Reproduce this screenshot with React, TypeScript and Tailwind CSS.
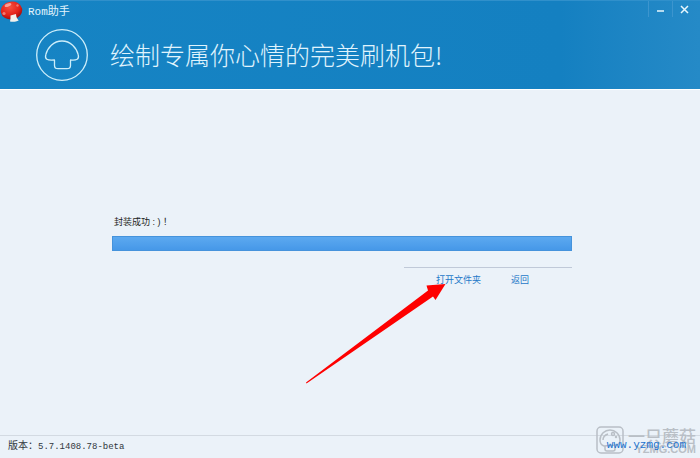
import type { ReactNode } from 'react';

function AppIcon() {
  return (
    <svg viewBox="0 0 24 22" className="h-[22px] w-6" aria-hidden="true">
      <defs>
        <radialGradient id="cap" cx="0.45" cy="0.3" r="0.75">
          <stop offset="0" stopColor="#f8503f" />
          <stop offset="0.6" stopColor="#e32119" />
          <stop offset="1" stopColor="#8c0a0c" />
        </radialGradient>
      </defs>
      <ellipse cx="11.500" cy="9.500" rx="10.800" ry="9" fill="url(#cap)" transform="rotate(-10 11.500 9.500)" />
      <ellipse cx="8" cy="4" rx="3.500" ry="1.600" fill="#fff" opacity="0.5" transform="rotate(-20 8 4)" />
      <circle cx="4" cy="12.500" r="1.600" fill="#ffb9ae" opacity="0.6" />
      <circle cx="17.500" cy="4.500" r="1.200" fill="#ffc3ba" opacity="0.5" />
      <path d="M10.500 14.500l5.500-1.500c0 2.500 1 4.500 2.700 6.500-2.700 1.300-5.400 1.500-8.700 1 .5-2 .7-4 .5-6z" fill="#f3f1ec" />
    </svg>
  );
}

function MushroomLogo() {
  return (
    <svg viewBox="0 0 52 52" className="size-[52px] shrink-0" fill="none" stroke="#cdeefa" strokeWidth="1.300" strokeLinejoin="round" aria-hidden="true">
      <circle cx="26" cy="26" r="25.300" />
      <path d="M18.500 31C15 31.300 12.500 31.300 10.800 30.300C9.300 29.400 9.300 27.500 9.800 25.700C11.500 18.500 17.500 12 26 12S40.500 18.500 42.200 25.700C42.700 27.500 42.700 29.400 41.200 30.300C39.500 31.300 37 31.300 34.500 31V36.500C34.500 38.700 33.200 39.700 31 39.700H22C19.800 39.700 18.500 38.700 18.500 36.500Z" />
    </svg>
  );
}

function WindowButton({ label, children }: { label: string; children: ReactNode }) {
  return (
    <button type="button" aria-label={label} className="flex h-4 w-6 justify-center border-l border-[#3c95ce] pt-1">
      {children}
    </button>
  );
}

function Watermark() {
  return (
    <div className="absolute right-1 bottom-1 flex items-center gap-1 text-[#b9bfc6]" aria-hidden="true">
      <svg viewBox="0 0 28 28" className="size-7" fill="none" stroke="currentColor" strokeWidth="1.500">
        <rect x="1" y="1" width="26" height="26" rx="4" />
        <path d="M8 20c-3-1-4-3-4-6C4 8 9 4 14 4s10 4 10 10c0 3-2 5-4 5-4 .5-8 .5-12 1z" />
        <path d="M9 20v3c0 1.500 1 2 2 2h6c1 0 2-.5 2-2v-3" />
        <circle cx="17" cy="8" r="1.500" />
        <circle cx="20" cy="11" r="0.500" />
        <path d="M7 14c0-3 2-5 5-6" />
      </svg>
      <div className="flex flex-col items-end">
        <span className="font-['Noto_Sans_CJK_SC',sans-serif] text-[17px] leading-[18px] font-medium">一只蘑菇</span>
        <span className="font-['Liberation_Sans',sans-serif] text-[11px] leading-[9px] font-bold">YZMG.COM</span>
      </div>
    </div>
  );
}

export default function App() {
  return (
    <div className="relative flex min-h-screen flex-col bg-[#ebf2f9] font-['Liberation_Sans','Noto_Sans_CJK_SC',sans-serif]">
      {/* Header */}
      <header className="h-[90px] border-t border-b border-t-[#3090cb] border-b-white bg-linear-to-r from-[#1684c4] via-[#1480c1] via-80% to-[#258ac7]">
        <div className="flex h-[22px] items-start justify-between pr-1">
          <div className="flex items-center gap-1 text-[11px] leading-[22px] text-[#e2f4fd]">
            <AppIcon />
            <span className="font-['Liberation_Mono','Noto_Sans_CJK_SC',monospace]">Rom助手</span>
          </div>
          <div className="flex">
            <WindowButton label="最小化">
              <svg viewBox="0 0 9 9" className="size-[9px]" stroke="#e8f7fd" strokeWidth="1.500" aria-hidden="true">
                <path d="M1 6h7" />
              </svg>
            </WindowButton>
            <WindowButton label="关闭">
              <svg viewBox="0 0 9 9" className="size-[9px]" stroke="#e8f7fd" strokeWidth="1.500" aria-hidden="true">
                <path d="M1 1l7 7M8 1l-7 7" />
              </svg>
            </WindowButton>
          </div>
        </div>
        <div className="flex items-center gap-[22px] pl-9">
          <div className="pt-1.5">
            <MushroomLogo />
          </div>
          <h1 className="pt-1 font-['Noto_Sans_CJK_SC',sans-serif] text-[25px] leading-8 font-light text-[#e0f4fd]">
            绘制专属你心情的完美刷机包!
          </h1>
        </div>
      </header>

      {/* Result */}
      <main className="flex-1 pt-[125px] pr-32 pl-28">
        <p id="status" className="pl-0.5 text-[9px] leading-[14px] text-[#1c1f22]">
          封装成功 : ) ！
        </p>
        <div
          role="progressbar"
          aria-labelledby="status"
          aria-valuenow={100}
          className="mt-[7px] h-[15px] border border-[#4593dc] bg-linear-to-b from-[#5ca9f0] to-[#4698e8]"
        />
        <div className="relative mt-4 ml-auto flex w-[168px] gap-[30px] border-t border-[#c0c9d8] pt-1 pl-8 text-[9px] leading-4 text-[#2478c8]">
          <a href="#folder">打开文件夹</a>
          <a href="#back">返回</a>
          {/* Pointer to the folder link */}
          <svg
            viewBox="0 0 142 102"
            className="pointer-events-none absolute top-4 right-[125px] h-[102px] w-[142px]"
            fill="#fe0000"
            aria-hidden="true"
          >
            <path d="M1 98.500L123 6.500L121.500 1.500L140.500 0L130.500 16L128 12.500L1.500 99.500z" />
          </svg>
        </div>
      </main>

      {/* Footer */}
      <footer className="flex h-[23px] items-center justify-between border-t border-[#d3dae2] pr-3.5 pl-2 font-['Liberation_Mono','Noto_Sans_CJK_SC',monospace]">
        <p className="text-[9px] text-[#30363c]">
          <span className="text-[10px]">版本：</span>5.7.1408.78-beta
        </p>
        <Watermark />
        <a href="#site" className="relative pb-1 text-[11px] text-[#2273cf]">
          www.yzmg.com
        </a>
      </footer>
    </div>
  );
}
